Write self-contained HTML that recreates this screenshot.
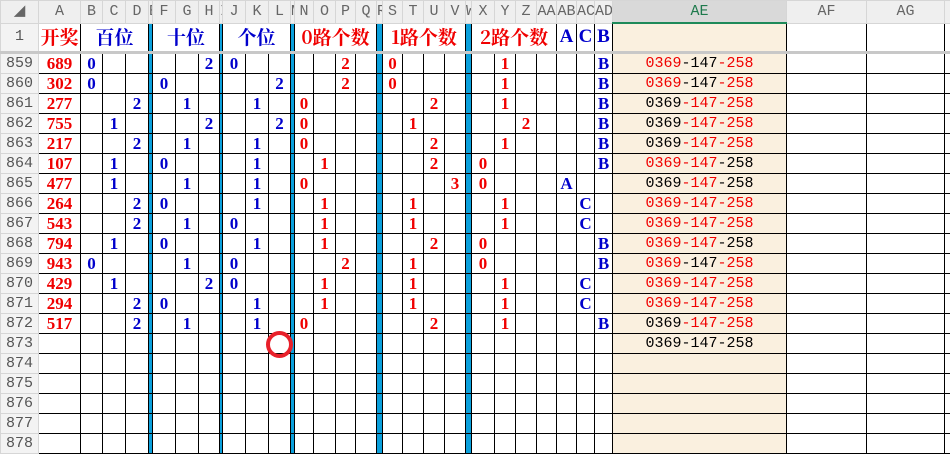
<!DOCTYPE html>
<html><head><meta charset="utf-8"><style>
body{margin:0;width:950px;height:440px;overflow:hidden;background:#fff;position:relative}
table{border-collapse:collapse;table-layout:fixed;width:950px;position:absolute;left:0;top:0}
td,th{padding:0;overflow:hidden;white-space:nowrap;text-align:center}
tr.h th{height:21px;background:#efefef;border:1px solid #d6d6d6;color:#666;font:15px "Liberation Mono",monospace;font-weight:normal;line-height:18px}
tr.h th.ae{background:#d9d9d9;color:#1e7a4c;border-bottom:2px solid #1e8a5a}
th.n{background:#f3f3f3;border:1px solid #d6d6d6;color:#555;font:15px "Liberation Mono",monospace;font-weight:normal;line-height:14px}
tr.d td{height:19px;border:1px solid #000;font:bold 17px/14px "Liberation Serif",serif}
tr.d th{height:19px}
tr.d td:nth-child(n+3):nth-child(-n+13){color:#0000cc}
tr.d td:nth-child(n+15):nth-child(-n+28){color:#f00000}
tr.d td:nth-child(n+29):nth-child(-n+31){color:#0000cc}
td.a,tr.d td:nth-child(2){color:#f00000}
tr.d td:nth-child(6),tr.d td:nth-child(10),tr.d td:nth-child(14),tr.d td:nth-child(19),tr.d td:nth-child(24),td.s{background:#0aa0dc}
tr.d td:nth-child(32),td.e{background:#faf0df;font:15px/14px "Liberation Mono",monospace!important;color:#000}
tr.o td{height:27px;border-top:1px solid #d6d6d6;border-bottom:3px solid #c8c8c8;border-left:1px solid #000;border-right:1px solid #000;font:bold 19px/22px "Noto Serif CJK SC","Liberation Serif",serif}
tr.o th{border-bottom:3px solid #c8c8c8;height:27px}
.R{color:#f00000}.B{color:#0000cc}.K{color:#000}
#c{position:absolute;left:266px;top:331px;width:19px;height:19px;border:4px solid #e8202a;border-radius:50%}
</style></head><body>
<table>
<colgroup><col style="width:38px"><col style="width:42px"><col style="width:22px"><col style="width:23px"><col style="width:23px"><col style="width:4px"><col style="width:23px"><col style="width:23px"><col style="width:21px"><col style="width:3px"><col style="width:23px"><col style="width:23px"><col style="width:22px"><col style="width:4px"><col style="width:19px"><col style="width:22px"><col style="width:20px"><col style="width:21px"><col style="width:6px"><col style="width:20px"><col style="width:21px"><col style="width:21px"><col style="width:21px"><col style="width:6px"><col style="width:23px"><col style="width:21px"><col style="width:21px"><col style="width:20px"><col style="width:20px"><col style="width:18px"><col style="width:18px"><col style="width:174px"><col style="width:80px"><col style="width:78px"><col style="width:6px"></colgroup>
<tr class="h"><th>◢</th><th>A</th><th>B</th><th>C</th><th>D</th><th>E</th><th>F</th><th>G</th><th>H</th><th>I</th><th>J</th><th>K</th><th>L</th><th>M</th><th>N</th><th>O</th><th>P</th><th>Q</th><th>R</th><th>S</th><th>T</th><th>U</th><th>V</th><th>W</th><th>X</th><th>Y</th><th>Z</th><th>AA</th><th>AB</th><th>AC</th><th>AD</th><th class="ae">AE</th><th>AF</th><th>AG</th><th></th></tr>
<tr class="o"><th class="n">1</th><td class="R" style="border-left:1px solid #d6d6d6">开奖</td><td colspan="3" class="B">百位</td><td class="s"></td><td colspan="3" class="B">十位</td><td class="s"></td><td colspan="3" class="B">个位</td><td class="s"></td><td colspan="4" class="R">0路个数</td><td class="s"></td><td colspan="4" class="R">1路个数</td><td class="s"></td><td colspan="4" class="R">2路个数</td><td class="B" style="font-family:'Liberation Serif',serif">A</td><td class="B" style="font-family:'Liberation Serif',serif">C</td><td class="B" style="font-family:'Liberation Serif',serif">B</td><td class="e"></td><td></td><td></td><td></td></tr>
<tr class="d"><th class="n">859</th><td>689</td><td>0</td><td></td><td></td><td></td><td></td><td></td><td>2</td><td></td><td>0</td><td></td><td></td><td></td><td></td><td></td><td>2</td><td></td><td></td><td>0</td><td></td><td></td><td></td><td></td><td></td><td>1</td><td></td><td></td><td></td><td></td><td>B</td><td><span class="R">0369</span>-147<span class="R">-258</span></td><td></td><td></td><td></td></tr>
<tr class="d"><th class="n">860</th><td>302</td><td>0</td><td></td><td></td><td></td><td>0</td><td></td><td></td><td></td><td></td><td></td><td>2</td><td></td><td></td><td></td><td>2</td><td></td><td></td><td>0</td><td></td><td></td><td></td><td></td><td></td><td>1</td><td></td><td></td><td></td><td></td><td>B</td><td><span class="R">0369</span>-147<span class="R">-258</span></td><td></td><td></td><td></td></tr>
<tr class="d"><th class="n">861</th><td>277</td><td></td><td></td><td>2</td><td></td><td></td><td>1</td><td></td><td></td><td></td><td>1</td><td></td><td></td><td>0</td><td></td><td></td><td></td><td></td><td></td><td></td><td>2</td><td></td><td></td><td></td><td>1</td><td></td><td></td><td></td><td></td><td>B</td><td>0369<span class="R">-147-258</span></td><td></td><td></td><td></td></tr>
<tr class="d"><th class="n">862</th><td>755</td><td></td><td>1</td><td></td><td></td><td></td><td></td><td>2</td><td></td><td></td><td></td><td>2</td><td></td><td>0</td><td></td><td></td><td></td><td></td><td></td><td>1</td><td></td><td></td><td></td><td></td><td></td><td>2</td><td></td><td></td><td></td><td>B</td><td>0369<span class="R">-147-258</span></td><td></td><td></td><td></td></tr>
<tr class="d"><th class="n">863</th><td>217</td><td></td><td></td><td>2</td><td></td><td></td><td>1</td><td></td><td></td><td></td><td>1</td><td></td><td></td><td>0</td><td></td><td></td><td></td><td></td><td></td><td></td><td>2</td><td></td><td></td><td></td><td>1</td><td></td><td></td><td></td><td></td><td>B</td><td>0369<span class="R">-147-258</span></td><td></td><td></td><td></td></tr>
<tr class="d"><th class="n">864</th><td>107</td><td></td><td>1</td><td></td><td></td><td>0</td><td></td><td></td><td></td><td></td><td>1</td><td></td><td></td><td></td><td>1</td><td></td><td></td><td></td><td></td><td></td><td>2</td><td></td><td></td><td>0</td><td></td><td></td><td></td><td></td><td></td><td>B</td><td><span class="R">0369-147</span>-258</td><td></td><td></td><td></td></tr>
<tr class="d"><th class="n">865</th><td>477</td><td></td><td>1</td><td></td><td></td><td></td><td>1</td><td></td><td></td><td></td><td>1</td><td></td><td></td><td>0</td><td></td><td></td><td></td><td></td><td></td><td></td><td></td><td>3</td><td></td><td>0</td><td></td><td></td><td></td><td>A</td><td></td><td></td><td>0369<span class="R">-147</span>-258</td><td></td><td></td><td></td></tr>
<tr class="d"><th class="n">866</th><td>264</td><td></td><td></td><td>2</td><td></td><td>0</td><td></td><td></td><td></td><td></td><td>1</td><td></td><td></td><td></td><td>1</td><td></td><td></td><td></td><td></td><td>1</td><td></td><td></td><td></td><td></td><td>1</td><td></td><td></td><td></td><td>C</td><td></td><td><span class="R">0369-147-258</span></td><td></td><td></td><td></td></tr>
<tr class="d"><th class="n">867</th><td>543</td><td></td><td></td><td>2</td><td></td><td></td><td>1</td><td></td><td></td><td>0</td><td></td><td></td><td></td><td></td><td>1</td><td></td><td></td><td></td><td></td><td>1</td><td></td><td></td><td></td><td></td><td>1</td><td></td><td></td><td></td><td>C</td><td></td><td><span class="R">0369-147-258</span></td><td></td><td></td><td></td></tr>
<tr class="d"><th class="n">868</th><td>794</td><td></td><td>1</td><td></td><td></td><td>0</td><td></td><td></td><td></td><td></td><td>1</td><td></td><td></td><td></td><td>1</td><td></td><td></td><td></td><td></td><td></td><td>2</td><td></td><td></td><td>0</td><td></td><td></td><td></td><td></td><td></td><td>B</td><td><span class="R">0369-147</span>-258</td><td></td><td></td><td></td></tr>
<tr class="d"><th class="n">869</th><td>943</td><td>0</td><td></td><td></td><td></td><td></td><td>1</td><td></td><td></td><td>0</td><td></td><td></td><td></td><td></td><td></td><td>2</td><td></td><td></td><td></td><td>1</td><td></td><td></td><td></td><td>0</td><td></td><td></td><td></td><td></td><td></td><td>B</td><td><span class="R">0369</span>-147<span class="R">-258</span></td><td></td><td></td><td></td></tr>
<tr class="d"><th class="n">870</th><td>429</td><td></td><td>1</td><td></td><td></td><td></td><td></td><td>2</td><td></td><td>0</td><td></td><td></td><td></td><td></td><td>1</td><td></td><td></td><td></td><td></td><td>1</td><td></td><td></td><td></td><td></td><td>1</td><td></td><td></td><td></td><td>C</td><td></td><td><span class="R">0369-147-258</span></td><td></td><td></td><td></td></tr>
<tr class="d"><th class="n">871</th><td>294</td><td></td><td></td><td>2</td><td></td><td>0</td><td></td><td></td><td></td><td></td><td>1</td><td></td><td></td><td></td><td>1</td><td></td><td></td><td></td><td></td><td>1</td><td></td><td></td><td></td><td></td><td>1</td><td></td><td></td><td></td><td>C</td><td></td><td><span class="R">0369-147-258</span></td><td></td><td></td><td></td></tr>
<tr class="d"><th class="n">872</th><td>517</td><td></td><td></td><td>2</td><td></td><td></td><td>1</td><td></td><td></td><td></td><td>1</td><td></td><td></td><td>0</td><td></td><td></td><td></td><td></td><td></td><td></td><td>2</td><td></td><td></td><td></td><td>1</td><td></td><td></td><td></td><td></td><td>B</td><td>0369<span class="R">-147-258</span></td><td></td><td></td><td></td></tr>
<tr class="d"><th class="n">873</th><td></td><td></td><td></td><td></td><td></td><td></td><td></td><td></td><td></td><td></td><td></td><td></td><td></td><td></td><td></td><td></td><td></td><td></td><td></td><td></td><td></td><td></td><td></td><td></td><td></td><td></td><td></td><td></td><td></td><td></td><td>0369-147-258</td><td></td><td></td><td></td></tr>
<tr class="d"><th class="n">874</th><td></td><td></td><td></td><td></td><td></td><td></td><td></td><td></td><td></td><td></td><td></td><td></td><td></td><td></td><td></td><td></td><td></td><td></td><td></td><td></td><td></td><td></td><td></td><td></td><td></td><td></td><td></td><td></td><td></td><td></td><td></td><td></td><td></td><td></td></tr>
<tr class="d"><th class="n">875</th><td></td><td></td><td></td><td></td><td></td><td></td><td></td><td></td><td></td><td></td><td></td><td></td><td></td><td></td><td></td><td></td><td></td><td></td><td></td><td></td><td></td><td></td><td></td><td></td><td></td><td></td><td></td><td></td><td></td><td></td><td></td><td></td><td></td><td></td></tr>
<tr class="d"><th class="n">876</th><td></td><td></td><td></td><td></td><td></td><td></td><td></td><td></td><td></td><td></td><td></td><td></td><td></td><td></td><td></td><td></td><td></td><td></td><td></td><td></td><td></td><td></td><td></td><td></td><td></td><td></td><td></td><td></td><td></td><td></td><td></td><td></td><td></td><td></td></tr>
<tr class="d"><th class="n">877</th><td></td><td></td><td></td><td></td><td></td><td></td><td></td><td></td><td></td><td></td><td></td><td></td><td></td><td></td><td></td><td></td><td></td><td></td><td></td><td></td><td></td><td></td><td></td><td></td><td></td><td></td><td></td><td></td><td></td><td></td><td></td><td></td><td></td><td></td></tr>
<tr class="d"><th class="n">878</th><td></td><td></td><td></td><td></td><td></td><td></td><td></td><td></td><td></td><td></td><td></td><td></td><td></td><td></td><td></td><td></td><td></td><td></td><td></td><td></td><td></td><td></td><td></td><td></td><td></td><td></td><td></td><td></td><td></td><td></td><td></td><td></td><td></td><td></td></tr>
</table>
<div id="c"></div>
</body></html>
